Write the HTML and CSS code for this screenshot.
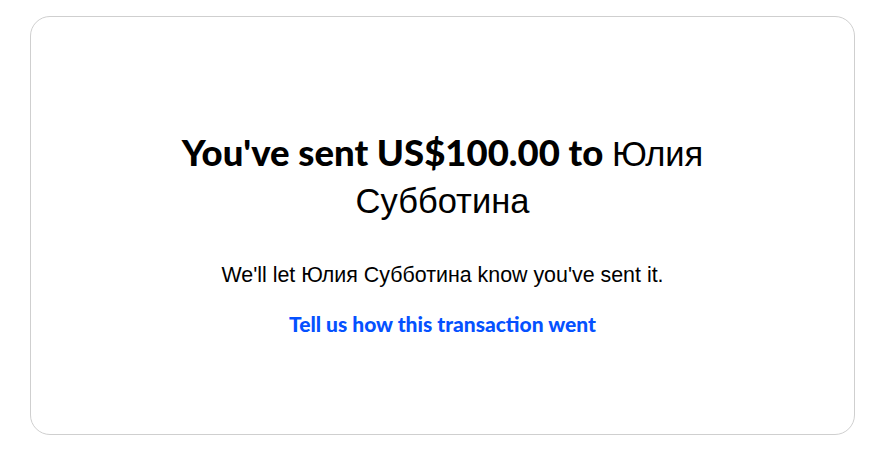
FILE: index.html
```html
<!DOCTYPE html>
<html lang="en">

<head>
    <meta charset="UTF-8">
    <meta name="viewport" content="width=device-width, initial-scale=1.0">
    <title>Payment sent</title>
    <link rel="stylesheet" href="styles.css">
</head>

<body>
    <div class="card">
        <h1 class="title">You've sent US$100.00 to <span class="name">Юлия</span> <span class="name">Субботина</span></h1>
        <p class="note">We'll let Юлия Субботина know you've sent it.</p>
        <a class="feedback" href="#">Tell us how this transaction went</a>
    </div>
</body>

</html>
```

FILE: styles.css
```css
body {
    margin: 16px 25px 0 30px;
    padding: 0;
    background: #fff;
    font-family: "Liberation Sans", Arial, sans-serif;
    color: #000;
}

.card {
    box-sizing: border-box;
    height: 419px;
    border: 1px solid #cfcfcf;
    border-radius: 20px;
    padding: 113px 60px 0;
    text-align: center;
}

.title {
    margin: 0 auto;
    max-width: 560px;
    font-family: Lato, "Liberation Sans", sans-serif;
    font-weight: 900;
    font-size: 36.5px;
    line-height: 45px;
}

.title .name {
    font-family: "Liberation Sans", Arial, sans-serif;
    font-weight: normal;
    font-size: 34.5px;
}

.note {
    margin: 36px 0 0;
    font-size: 21.4px;
    line-height: 30px;
}

.feedback {
    display: inline-block;
    margin-top: 19px;
    font-family: Lato, "Liberation Sans", sans-serif;
    font-weight: 900;
    font-size: 21px;
    line-height: 30px;
    color: #0551ff;
    text-decoration: none;
}
```
